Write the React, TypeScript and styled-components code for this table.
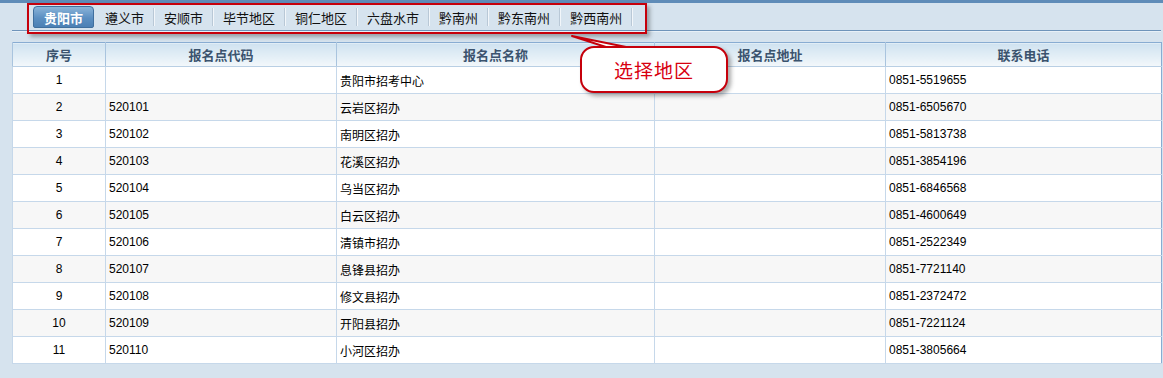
import styled, { createGlobalStyle } from 'styled-components'

const GlobalStyle = createGlobalStyle`
  html, body {
    margin: 0;
    padding: 0;
    background: #d6e3ee;
  }
  body {
    font-family: "Liberation Sans", "Noto Sans CJK SC", sans-serif;
    font-size: 12px;
    color: #000;
  }
`

const REGIONS = ['贵阳市', '遵义市', '安顺市', '毕节地区', '铜仁地区', '六盘水市', '黔南州', '黔东南州', '黔西南州']

const ROWS = [
  ['1', '', '贵阳市招考中心', '', '0851-5519655'],
  ['2', '520101', '云岩区招办', '', '0851-6505670'],
  ['3', '520102', '南明区招办', '', '0851-5813738'],
  ['4', '520103', '花溪区招办', '', '0851-3854196'],
  ['5', '520104', '乌当区招办', '', '0851-6846568'],
  ['6', '520105', '白云区招办', '', '0851-4600649'],
  ['7', '520106', '清镇市招办', '', '0851-2522349'],
  ['8', '520107', '息锋县招办', '', '0851-7721140'],
  ['9', '520108', '修文县招办', '', '0851-2372472'],
  ['10', '520109', '开阳县招办', '', '0851-7221124'],
  ['11', '520110', '小河区招办', '', '0851-3805664'],
]

const COLUMNS = [
  { title: '序号', width: 93, center: true },
  { title: '报名点代码', width: 231 },
  { title: '报名点名称', width: 318 },
  { title: '报名点地址', width: 231 },
  { title: '联系电话', width: 276 },
]

const Page = styled.div`
  position: relative;
  min-height: 378px;
  background: #d6e3ee;
`

const TopBar = styled.div`
  height: 3px;
  background: #5f8cb8;
`

const TabBar = styled.div`
  display: flex;
  align-items: flex-end;
  height: 28px;
  margin: 0 2px 0 12px;
  padding: 0 0 2px 21px;
  box-sizing: border-box;
  border-bottom: 1px solid #6f94ba;
  box-shadow: 0 1px 0 #e8f0f7;
`

const Tab = styled.div<{ $active?: boolean }>`
  display: flex;
  align-items: center;
  height: 22px;
  box-sizing: border-box;
  font-family: "Noto Sans CJK SC", sans-serif;
  font-size: 13px;
  white-space: nowrap;
  ${({ $active }) =>
    $active
      ? `
    padding: 0 10px;
    margin-right: 1px;
    color: #fff;
    font-weight: bold;
    border: 1px solid #3f6f9e;
    border-radius: 4px 4px 2px 2px;
    background: linear-gradient(#8ab3d8, #5b8fc2 55%, #4c80b4);
  `
      : `
    padding: 0 9px 0 10px;
    color: #111;
    border-right: 1px solid #b9c8d6;
    box-shadow: 1px 0 0 #f2f6fa;
    height: 18px;
    margin-bottom: 2px;
  `}
`

const TableWrap = styled.div`
  margin: 11px 2px 0 12px;
`

const Table = styled.table`
  width: 1149px;
  border-collapse: collapse;
  table-layout: fixed;
  border: 1px solid #88acd2;
  background: #fff;
`

const HeadCell = styled.th`
  height: 23px;
  padding: 0;
  font-family: "Noto Sans CJK SC", sans-serif;
  font-size: 13px;
  font-weight: bold;
  color: #3b536e;
  text-align: center;
  border-left: 1px solid #a9c4de;
  border-bottom: 1px solid #b9cfe4;
  background: linear-gradient(#cfe2f0, #f3f8fb);
`

const Row = styled.tr<{ $odd: boolean }>`
  background: ${({ $odd }) => ($odd ? '#f7f7f7' : '#ffffff')};
`

const Cell = styled.td<{ $center?: boolean }>`
  height: 26px;
  padding: 0 3px;
  font-family: "Liberation Sans", "Noto Sans CJK SC", sans-serif;
  font-size: 12px;
  text-align: ${({ $center }) => ($center ? 'center' : 'left')};
  border-left: 1px solid #c6d8ea;
  border-bottom: 1px solid #c6d8ea;
  white-space: nowrap;
`

const Highlight = styled.div`
  position: absolute;
  left: 27px;
  top: 3px;
  width: 620px;
  height: 31px;
  box-sizing: border-box;
  border: 2px solid #c6000b;
  box-shadow: 3px 3px 4px rgba(40, 40, 40, 0.35);
  pointer-events: none;
`

const Pointer = styled.svg`
  position: absolute;
  left: 565px;
  top: 30px;
  overflow: visible;
`

const Callout = styled.div`
  position: absolute;
  left: 580px;
  top: 46px;
  width: 148px;
  height: 47px;
  box-sizing: border-box;
  display: flex;
  align-items: center;
  justify-content: center;
  border: 2px solid #c6000b;
  border-radius: 14px;
  background: #fff;
  box-shadow: 3px 3px 4px rgba(40, 40, 40, 0.4);
  font-family: "Noto Sans CJK SC", sans-serif;
  font-size: 19px;
  color: #d8000f;
  letter-spacing: 1px;
`

export default function App() {
  return (
    <Page>
      <GlobalStyle />
      <TopBar />
      <TabBar>
        {REGIONS.map((r, i) => (
          <Tab key={r} $active={i === 0}>
            {r}
          </Tab>
        ))}
      </TabBar>
      <TableWrap>
        <Table>
          <colgroup>
            {COLUMNS.map((c) => (
              <col key={c.title} style={{ width: c.width }} />
            ))}
          </colgroup>
          <thead>
            <tr>
              {COLUMNS.map((c) => (
                <HeadCell key={c.title}>{c.title}</HeadCell>
              ))}
            </tr>
          </thead>
          <tbody>
            {ROWS.map((row, i) => (
              <Row key={row[0]} $odd={i % 2 === 1}>
                {row.map((v, j) => (
                  <Cell key={j} $center={COLUMNS[j].center}>
                    {v}
                  </Cell>
                ))}
              </Row>
            ))}
          </tbody>
        </Table>
      </TableWrap>
      <Highlight />
      <Pointer width="80" height="20" viewBox="0 0 80 20">
        <polygon points="7,6 44,18 66,18" fill="#fff" stroke="#c6000b" strokeWidth="2" strokeLinejoin="round" />
      </Pointer>
      <Callout>选择地区</Callout>
    </Page>
  )
}
